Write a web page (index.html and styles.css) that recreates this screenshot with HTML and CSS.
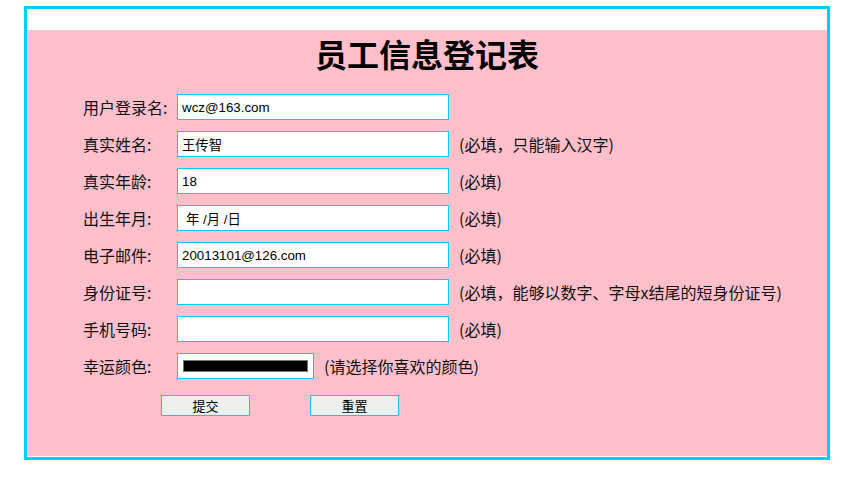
FILE: index.html
```html
<!DOCTYPE html>
<html lang="zh-CN">
<head>
    <meta charset="UTF-8">
    <title>员工信息登记表</title>
    <link rel="stylesheet" href="styles.css">
</head>
<body>
    <div class="moldura">
        <form class="ficha">
            <h1 class="titulo">员工信息登记表</h1>

            <div class="linhas">
                <div class="linha">
                    <label class="rotulo">用户登录名:</label>
                    <input class="campo" type="text" value="wcz@163.com">
                </div>
                <div class="linha">
                    <label class="rotulo">真实姓名:</label>
                    <input class="campo" type="text" value="王传智">
                    <span class="dica">(必填，只能输入汉字)</span>
                </div>
                <div class="linha">
                    <label class="rotulo">真实年龄:</label>
                    <input class="campo" type="text" value="18">
                    <span class="dica">(必填)</span>
                </div>
                <div class="linha">
                    <label class="rotulo">出生年月:</label>
                    <input class="campo campo-data" type="text" value="年 /月 /日">
                    <span class="dica">(必填)</span>
                </div>
                <div class="linha">
                    <label class="rotulo">电子邮件:</label>
                    <input class="campo" type="text" value="20013101@126.com">
                    <span class="dica">(必填)</span>
                </div>
                <div class="linha">
                    <label class="rotulo">身份证号:</label>
                    <input class="campo" type="text">
                    <span class="dica">(必填，能够以数字、字母x结尾的短身份证号)</span>
                </div>
                <div class="linha">
                    <label class="rotulo">手机号码:</label>
                    <input class="campo" type="text">
                    <span class="dica">(必填)</span>
                </div>
                <div class="linha">
                    <label class="rotulo">幸运颜色:</label>
                    <input class="cor" type="color" value="#000000">
                    <span class="dica">(请选择你喜欢的颜色)</span>
                </div>
            </div>

            <!-- botoes -->
            <div class="botoes">
                <button class="botao" type="submit">提交</button>
                <button class="botao" type="reset">重置</button>
            </div>
        </form>
    </div>
</body>
</html>
```

FILE: styles.css
```css
body {
    margin: 0;
    background-color: #ffffff;
    font-family: "Noto Sans CJK SC", "Liberation Sans", sans-serif;
    color: #111;
}

.moldura {
    width: 800px;
    margin: 6px 0 0 24px;
    padding: 21px 0 1px 0;
    border: 3px solid #00ccff;
}

.ficha {
    background-color: #ffc0cb;
    padding: 3px 0 40px 0;
    margin: 0;
}

.titulo {
    margin: 0 0 21px 0;
    height: 40px;
    line-height: 40px;
    font-size: 32px;
    font-weight: bold;
    text-align: center;
    color: #000;
}

.linhas {
    display: flex;
    flex-direction: column;
    gap: 11px;
    padding-left: 56px;
}

.linha {
    display: flex;
    align-items: center;
    height: 26px;
}

.rotulo {
    width: 94px;
    flex-shrink: 0;
    font-size: 16px;
    line-height: 26px;
}

.campo {
    box-sizing: border-box;
    width: 272px;
    height: 26px;
    margin: 0;
    padding: 0 4px;
    border: 1px solid #00ccff;
    background-color: #fff;
    font-family: "Liberation Sans", "Noto Sans CJK SC", sans-serif;
    font-size: 13.333px;
    color: #000;
    outline: none;
}

.campo-data {
    padding-left: 8px;
}

.cor {
    box-sizing: border-box;
    width: 137px;
    height: 26px;
    margin: 0;
    padding: 0;
    border: 1px solid #00ccff;
    background-color: #fff;
}

.cor::-webkit-color-swatch-wrapper {
    padding: 6px 5px;
}

.cor::-webkit-color-swatch {
    border: 1px solid #777;
    border-radius: 0;
}

.dica {
    margin-left: 10px;
    font-size: 16px;
    line-height: 26px;
    white-space: nowrap;
}

.botoes {
    display: flex;
    gap: 60px;
    margin-top: 16px;
    padding-left: 134px;
}

.botao {
    box-sizing: border-box;
    width: 89px;
    height: 21px;
    margin: 0;
    padding: 0;
    border: 1px solid #00ccff;
    background-color: #efefef;
    font-family: "Noto Sans CJK SC", sans-serif;
    font-size: 13px;
    font-weight: normal;
    line-height: 19px;
    color: #000;
}
```
